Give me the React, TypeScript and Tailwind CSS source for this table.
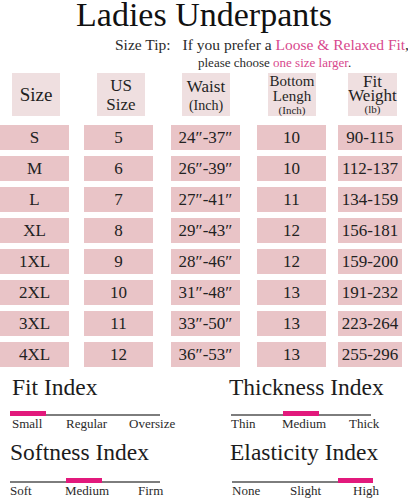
import React from 'react'

const cols = [
  { key: 'size', cell: 'w-[69px]', head: 'ml-[12px]' },
  { key: 'us', cell: 'ml-[15px] w-[69px]', head: 'ml-[13px]' },
  { key: 'waist', cell: 'ml-[18px] w-[69px]', head: 'ml-[11px]' },
  { key: 'bottom', cell: 'ml-[17px] w-[69px]', head: 'ml-[11px]' },
  { key: 'fit', cell: 'ml-[12px] w-[64px]', head: 'ml-[10px] w-[49px]' },
]

const rows = [
  ['S', '5', '24″-37″', '10', '90-115'],
  ['M', '6', '26″-39″', '10', '112-137'],
  ['L', '7', '27″-41″', '11', '134-159'],
  ['XL', '8', '29″-43″', '12', '156-181'],
  ['1XL', '9', '28″-46″', '12', '159-200'],
  ['2XL', '10', '31″-48″', '13', '191-232'],
  ['3XL', '11', '33″-50″', '13', '223-264'],
  ['4XL', '12', '36″-53″', '13', '255-296'],
]

interface IIndexProps {
  title: string
  titleCls: string
  barBefore: string
  barAfter: string
  barPink: string
  rowCls: string
  labels: string[]
  labelCls: string[]
}

function IndexBlock({ title, titleCls, barBefore, barAfter, barPink, rowCls, labels, labelCls }: IIndexProps) {
  return (
    <div className="flex flex-col">
      <div className={'text-[23.5px] leading-[28px] text-[#1c1c1c] ' + titleCls}>{title}</div>
      <div className={'flex h-[6px] items-end ' + rowCls}>
        <div className={'h-[2px] bg-[#7d7d7d] ' + barBefore} />
        <div className={'h-[5px] bg-[#e2197c] ' + barPink} />
        <div className={'h-[2px] bg-[#7d7d7d] ' + barAfter} />
      </div>
      <div className="flex text-[13px] leading-[16px] text-[#2a2a2a]">
        {labels.map((l, i) => (
          <span key={l} className={labelCls[i]}>
            {l}
          </span>
        ))}
      </div>
    </div>
  )
}

function HeaderBox({ idx }: { idx: number }) {
  const base = 'flex h-[43px] w-[48px] flex-col items-center justify-center bg-[#efdfe0] text-[#1f1f1f]'
  if (idx === 0) {
    return (
      <div className={base}>
        <span className="text-[19px] leading-[20px]">Size</span>
      </div>
    )
  }
  if (idx === 1) {
    return (
      <div className={base + ' pt-[1px]'}>
        <span className="text-[17px] leading-[19px]">US</span>
        <span className="text-[17px] leading-[19px]">Size</span>
      </div>
    )
  }
  if (idx === 2) {
    return (
      <div className={base + ' pt-[2px]'}>
        <span className="text-[17px] leading-[19px]">Waist</span>
        <span className="text-[14px] leading-[19px]">(Inch)</span>
      </div>
    )
  }
  if (idx === 3) {
    return (
      <div className={base}>
        <span className="text-[15px] leading-[15px]">Bottom</span>
        <span className="text-[15px] leading-[15px]">Lengh</span>
        <span className="text-[11px] leading-[12px]">(Inch)</span>
      </div>
    )
  }
  return (
    <div className={base + ' w-[49px]'}>
      <span className="text-[17px] leading-[13px]">Fit</span>
      <span className="text-[17px] leading-[15px]">Weight</span>
      <span className="text-[11px] leading-[12px]">(lb)</span>
    </div>
  )
}

export default function App() {
  return (
    <div className="h-[500px] w-[408px] overflow-hidden bg-white font-['Liberation_Serif',serif] text-[#1f1f1f]">
      <h1 className="text-center text-[34px] leading-[30px] font-normal text-[#111]">Ladies Underpants</h1>

      <div className="mt-[5px] pl-[115px] text-[15.5px] leading-[20px] whitespace-nowrap text-[#2a2a2a]">
        Size Tip:<span className="ml-[12px]">If you prefer a </span>
        <span className="text-[#d8488d]">Loose &amp; Relaxed Fit</span>,
      </div>
      <div className="pl-[198px] text-[13px] leading-[16px] whitespace-nowrap text-[#2a2a2a]">
        please choose <span className="text-[#d8488d]">one size larger</span>.
      </div>

      <div className="mt-[2px] flex">
        {cols.map((c, i) => (
          <div key={c.key} className={'flex ' + c.cell}>
            <div className={c.head}>
              <HeaderBox idx={i} />
            </div>
          </div>
        ))}
      </div>

      <div className="mt-[9px] flex flex-col gap-[6px]">
        {rows.map((r) => (
          <div key={r[0]} className="flex">
            {r.map((v, i) => (
              <div
                key={i}
                className={
                  'flex h-[25px] items-center justify-center bg-[#e9c4c7] text-[17px] leading-[20px] text-[#222] ' +
                  cols[i].cell
                }
              >
                {v}
              </div>
            ))}
          </div>
        ))}
      </div>

      <div className="mt-[6px] grid grid-cols-[230px_178px]">
        <div className="flex flex-col gap-[6px] pl-[10px]">
          <IndexBlock
            title="Fit Index"
            titleCls="ml-[2px]"
            rowCls="mt-[9px]"
            barBefore="w-0"
            barPink="w-[36px]"
            barAfter="w-[114px]"
            labels={['Small', 'Regular', 'Oversize']}
            labelCls={['ml-[2px] w-[54px]', 'w-[63px]', '']}
          />
          <IndexBlock
            title="Softness Index"
            titleCls=""
            rowCls="mt-[11px]"
            barBefore="w-[56px]"
            barPink="w-[36px]"
            barAfter="w-[58px]"
            labels={['Soft', 'Medium', 'Firm']}
            labelCls={['w-[55px]', 'w-[73px]', '']}
          />
        </div>
        <div className="flex flex-col gap-[6px]">
          <IndexBlock
            title="Thickness Index"
            titleCls="-ml-[1px]"
            rowCls="mt-[9px] ml-[1px]"
            barBefore="w-[52px]"
            barPink="w-[36px]"
            barAfter="w-[52px]"
            labels={['Thin', 'Medium', 'Thick']}
            labelCls={['ml-[1px] w-[51px]', 'w-[67px]', '']}
          />
          <IndexBlock
            title="Elasticity Index"
            titleCls=""
            rowCls="mt-[11px] ml-[2px]"
            barBefore="w-[106px]"
            barPink="w-[35px]"
            barAfter="w-0"
            labels={['None', 'Slight', 'High']}
            labelCls={['ml-[2px] w-[58px]', 'w-[63px]', '']}
          />
        </div>
      </div>
    </div>
  )
}
